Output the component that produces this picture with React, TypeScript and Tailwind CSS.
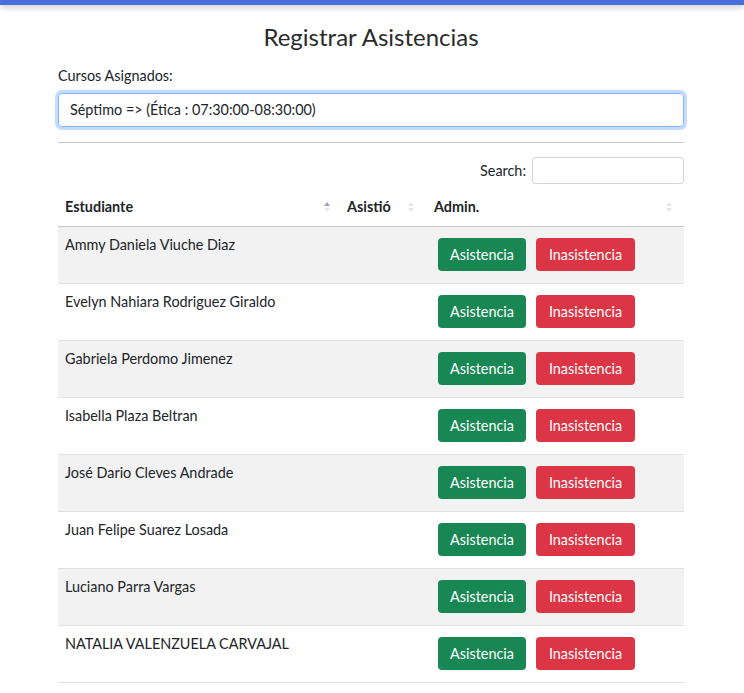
import React from 'react';

const estudiantes = [
    'Ammy Daniela Viuche Diaz',
    'Evelyn Nahiara Rodriguez Giraldo',
    'Gabriela Perdomo Jimenez',
    'Isabella Plaza Beltran',
    'José Dario Cleves Andrade',
    'Juan Felipe Suarez Losada',
    'Luciano Parra Vargas',
    'NATALIA VALENZUELA CARVAJAL',
];

function SortIcon({active}: { active?: boolean }) {
    return (
        <span className="inline-flex flex-col items-center gap-[2px]">
            <svg width="6" height="4" viewBox="0 0 6 4">
                <path d="M3 0 L6 4 L0 4 Z" fill={active ? '#9ca3af' : '#e5e7eb'}/>
            </svg>
            <svg width="6" height="4" viewBox="0 0 6 4">
                <path d="M0 0 L6 0 L3 4 Z" fill="#e5e7eb"/>
            </svg>
        </span>
    );
}

function App() {
    return (
        <div className="min-h-screen bg-white text-[#212529]" style={{fontFamily: 'Lato, "Noto Sans", sans-serif'}}>
            <div className="h-[5px] bg-[#4a6fdc] shadow-[0_2px_6px_rgba(0,0,0,0.25)]"></div>
            <div className="mx-[58px] w-[626px]">
                <h1 className="mt-[17px] text-center text-[24px] leading-[30px] font-normal text-[#2b2b2b]">Registrar Asistencias</h1>
                <div className="mt-[14px] text-[14.4px] leading-[20px]">Cursos Asignados:</div>
                <div className="mt-[7px] flex h-[34px] items-center rounded-[4px] border border-[#86b7fe] px-[11px] text-[14.4px] shadow-[0_0_0_3px_rgba(13,110,253,0.25)]">
                    Séptimo =&gt; (Ética : 07:30:00-08:30:00)
                </div>
                <hr className="mt-[15px] border-t border-[#c8c8c8]"/>
                <div className="mt-[14px] flex items-center justify-end gap-[6px] text-[14.4px]">
                    <span>Search:</span>
                    <input className="h-[27px] w-[152px] rounded-[3px] border border-[#d1d5db]" type="text"/>
                </div>
                <table className="mt-[8px] w-full border-collapse text-[14.4px]">
                    <thead>
                    <tr className="h-[34px] border-b border-[#c8c8c8]">
                        <th className="w-[279px] px-[7px] pb-[3px] text-left font-bold">
                            <div className="flex items-center justify-between">
                                <span>Estudiante</span>
                                <SortIcon active/>
                            </div>
                        </th>
                        <th className="w-[87px] px-[10px] pb-[3px] text-left font-bold">
                            <div className="flex items-center justify-between">
                                <span>Asistió</span>
                                <SortIcon/>
                            </div>
                        </th>
                        <th className="px-[10px] pr-[12px] pb-[3px] text-left font-bold">
                            <div className="flex items-center justify-between">
                                <span>Admin.</span>
                                <SortIcon/>
                            </div>
                        </th>
                    </tr>
                    </thead>
                    <tbody>
                    {estudiantes.map((nombre, i) => (
                        <tr key={i} className={`h-[57px] border-b border-[#dee2e6] ${i % 2 === 0 ? 'bg-[#f2f2f2]' : 'bg-white'}`}>
                            <td className="px-[7px] pt-[8px] align-top leading-[20px]">{nombre}</td>
                            <td></td>
                            <td className="px-[14px]">
                                <div className="flex gap-[10px]">
                                    <button className="h-[33px] w-[88px] rounded-[4px] bg-[#198754] text-[14.4px] text-white">Asistencia</button>
                                    <button className="h-[33px] w-[99px] rounded-[4px] bg-[#dc3545] text-[14.4px] text-white">Inasistencia</button>
                                </div>
                            </td>
                        </tr>
                    ))}
                    </tbody>
                </table>
            </div>
        </div>
    );
}

export default App;
